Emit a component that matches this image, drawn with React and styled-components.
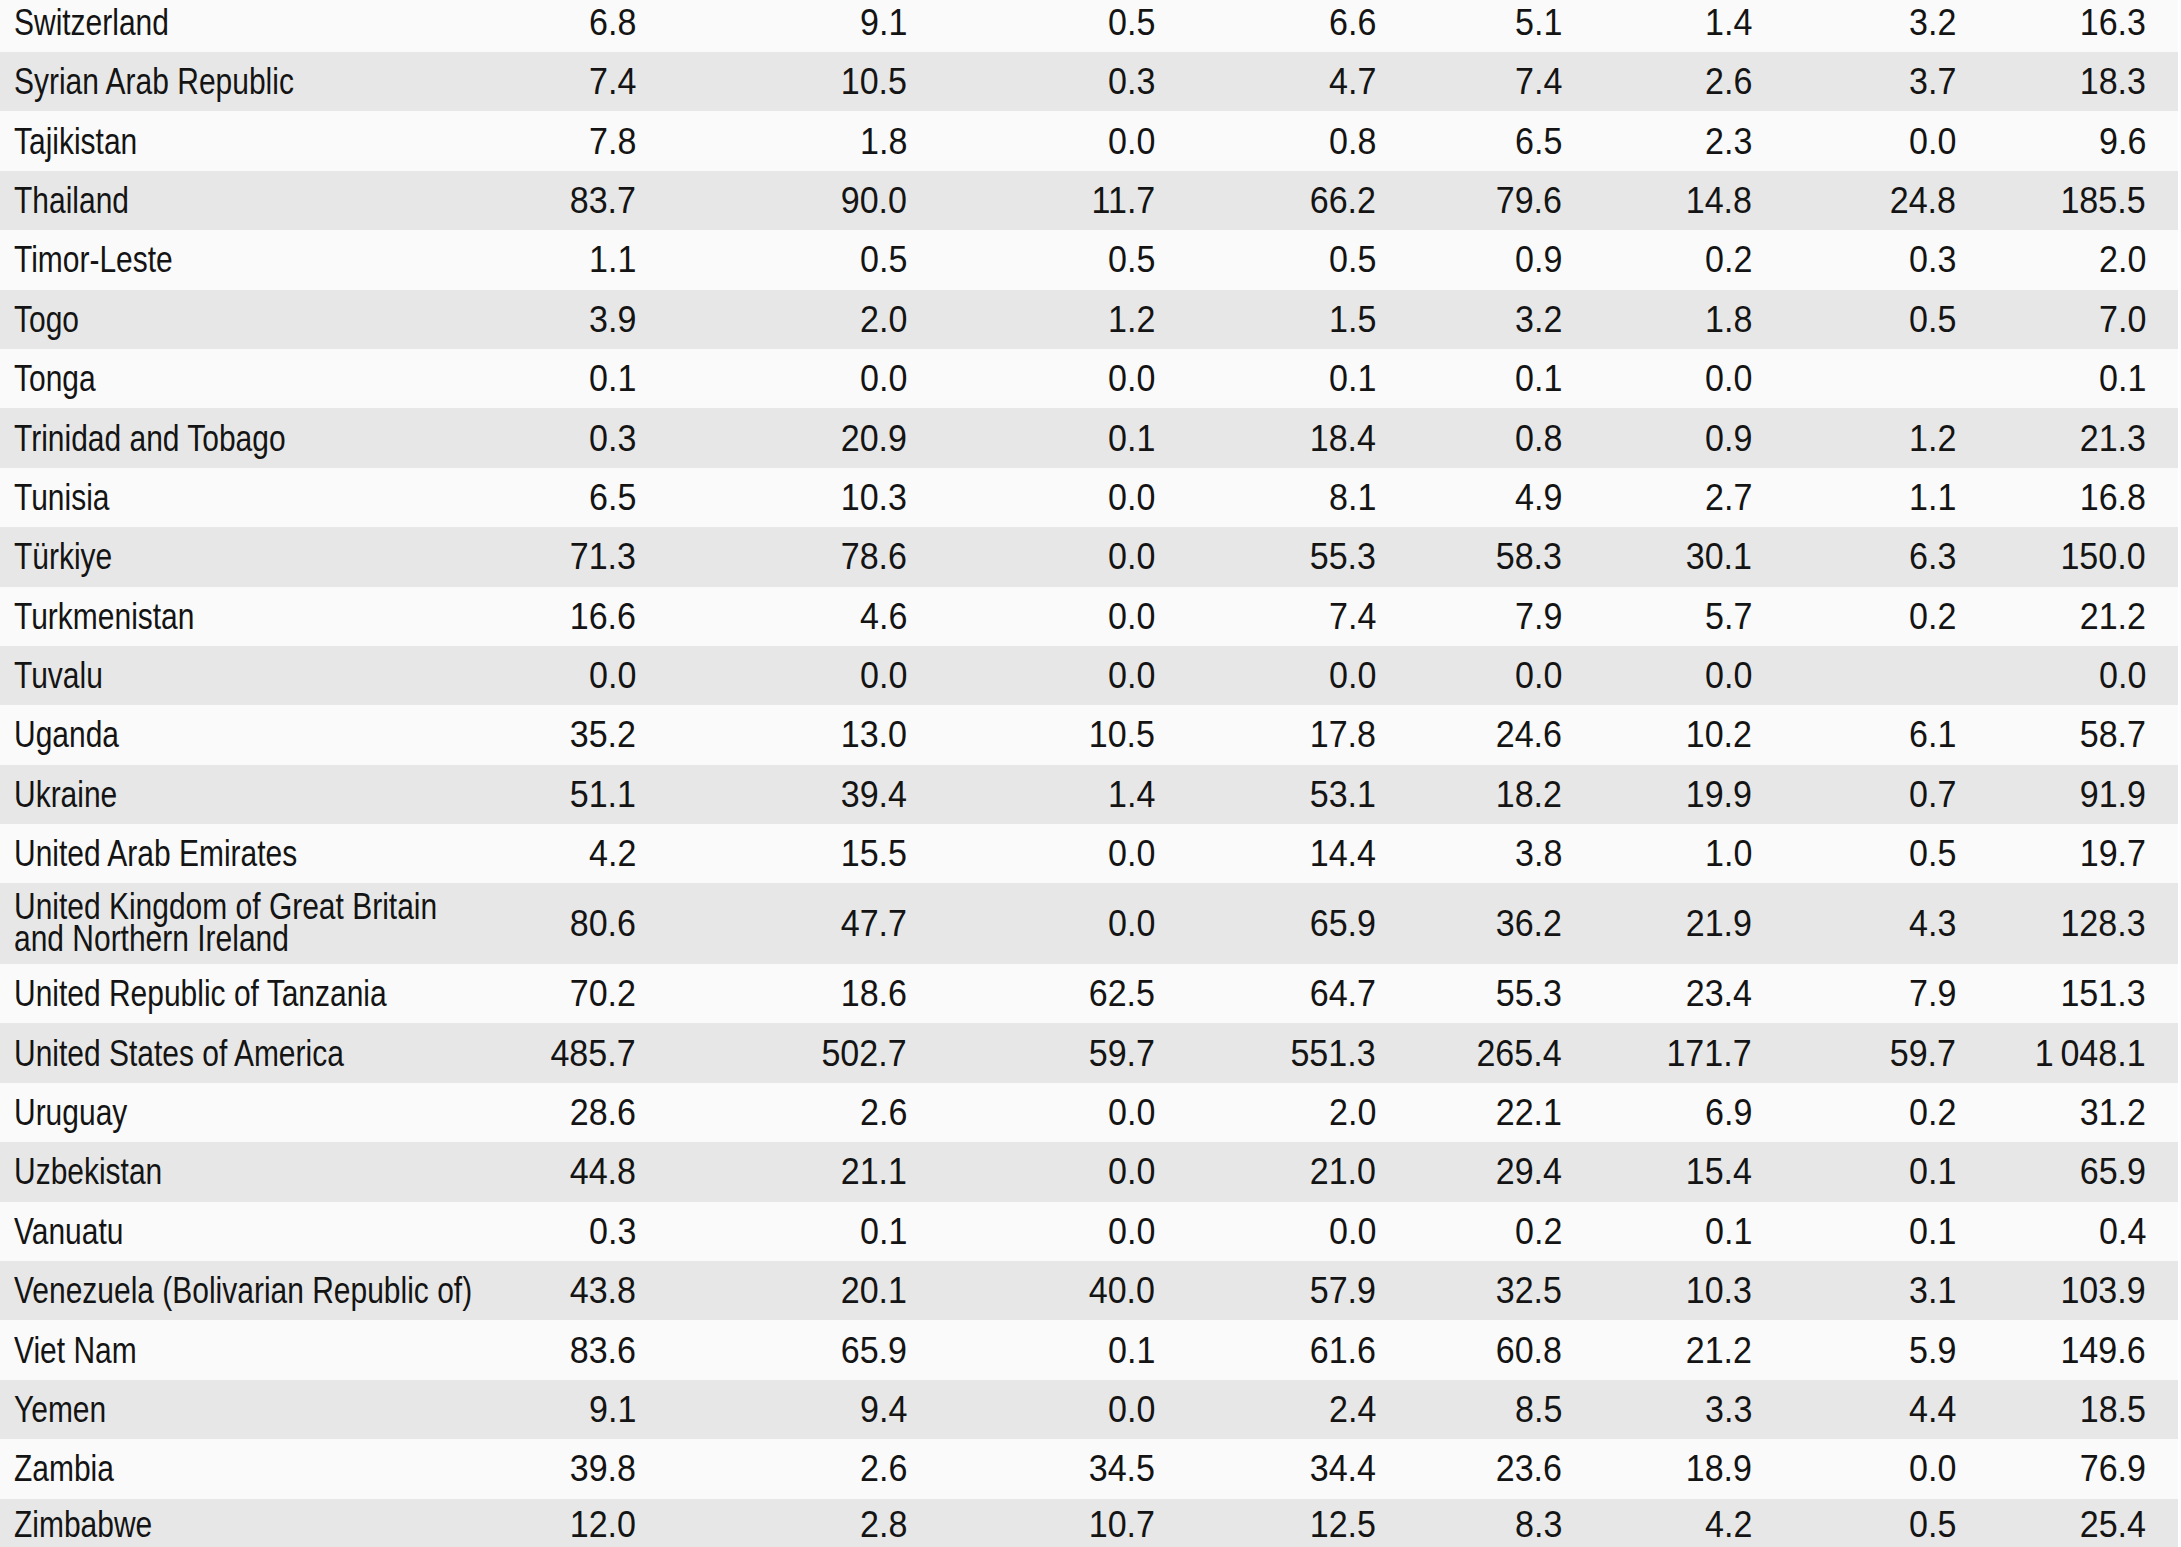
import React from 'react';
import styled, { createGlobalStyle } from 'styled-components';

const GlobalStyle = createGlobalStyle`
  html, body {
    margin: 0;
    padding: 0;
    background: #ffffff;
    overflow: hidden;
  }
  body {
    font-family: "Liberation Sans", Arial, sans-serif;
    color: #141414;
  }
`;

const Table = styled.div`
  width: 2178px;
  margin-top: -7.4px;
  display: flex;
  flex-direction: column;
`;

const rowHeight = p => (p.$tall ? '80.6px' : p.$last ? '52px' : '59.4px');

const Row = styled.div`
  display: grid;
  grid-template-columns: 460px 176px 271px 248px 221px 186px 190px 204px 190px;
  align-items: center;
  height: ${rowHeight};
  padding-right: 32px;
  background: ${p => (p.$alt ? '#e7e7e7' : '#fafafa')};
  font-size: 37px;
  line-height: 37px;
`;

const Name = styled.div`
  padding-left: 14px;
  white-space: nowrap;
`;

// the source face is narrower than Arial, so squeeze the glyphs horizontally
const NameText = styled.span`
  display: inline-block;
  transform: scaleX(0.81);
  transform-origin: left center;
  line-height: ${p => (p.$tall ? '32px' : '37px')};
`;

const Num = styled.div`
  text-align: right;
  white-space: nowrap;
`;

const NumText = styled.span`
  display: inline-block;
  transform: scaleX(0.92);
  transform-origin: right center;
`;

const rows = [
  ['Switzerland', '6.8', '9.1', '0.5', '6.6', '5.1', '1.4', '3.2', '16.3'],
  ['Syrian Arab Republic', '7.4', '10.5', '0.3', '4.7', '7.4', '2.6', '3.7', '18.3'],
  ['Tajikistan', '7.8', '1.8', '0.0', '0.8', '6.5', '2.3', '0.0', '9.6'],
  ['Thailand', '83.7', '90.0', '11.7', '66.2', '79.6', '14.8', '24.8', '185.5'],
  ['Timor-Leste', '1.1', '0.5', '0.5', '0.5', '0.9', '0.2', '0.3', '2.0'],
  ['Togo', '3.9', '2.0', '1.2', '1.5', '3.2', '1.8', '0.5', '7.0'],
  ['Tonga', '0.1', '0.0', '0.0', '0.1', '0.1', '0.0', '', '0.1'],
  ['Trinidad and Tobago', '0.3', '20.9', '0.1', '18.4', '0.8', '0.9', '1.2', '21.3'],
  ['Tunisia', '6.5', '10.3', '0.0', '8.1', '4.9', '2.7', '1.1', '16.8'],
  ['Türkiye', '71.3', '78.6', '0.0', '55.3', '58.3', '30.1', '6.3', '150.0'],
  ['Turkmenistan', '16.6', '4.6', '0.0', '7.4', '7.9', '5.7', '0.2', '21.2'],
  ['Tuvalu', '0.0', '0.0', '0.0', '0.0', '0.0', '0.0', '', '0.0'],
  ['Uganda', '35.2', '13.0', '10.5', '17.8', '24.6', '10.2', '6.1', '58.7'],
  ['Ukraine', '51.1', '39.4', '1.4', '53.1', '18.2', '19.9', '0.7', '91.9'],
  ['United Arab Emirates', '4.2', '15.5', '0.0', '14.4', '3.8', '1.0', '0.5', '19.7'],
  [['United Kingdom of Great Britain', 'and Northern Ireland'], '80.6', '47.7', '0.0', '65.9', '36.2', '21.9', '4.3', '128.3'],
  ['United Republic of Tanzania', '70.2', '18.6', '62.5', '64.7', '55.3', '23.4', '7.9', '151.3'],
  ['United States of America', '485.7', '502.7', '59.7', '551.3', '265.4', '171.7', '59.7', '1\u2009048.1'],
  ['Uruguay', '28.6', '2.6', '0.0', '2.0', '22.1', '6.9', '0.2', '31.2'],
  ['Uzbekistan', '44.8', '21.1', '0.0', '21.0', '29.4', '15.4', '0.1', '65.9'],
  ['Vanuatu', '0.3', '0.1', '0.0', '0.0', '0.2', '0.1', '0.1', '0.4'],
  ['Venezuela (Bolivarian Republic of)', '43.8', '20.1', '40.0', '57.9', '32.5', '10.3', '3.1', '103.9'],
  ['Viet Nam', '83.6', '65.9', '0.1', '61.6', '60.8', '21.2', '5.9', '149.6'],
  ['Yemen', '9.1', '9.4', '0.0', '2.4', '8.5', '3.3', '4.4', '18.5'],
  ['Zambia', '39.8', '2.6', '34.5', '34.4', '23.6', '18.9', '0.0', '76.9'],
  ['Zimbabwe', '12.0', '2.8', '10.7', '12.5', '8.3', '4.2', '0.5', '25.4'],
];

export default function App() {
  return (
    <>
      <GlobalStyle />
      <Table>
        {rows.map(([name, ...values], i) => {
          const tall = Array.isArray(name);
          return (
            <Row key={i} $alt={i % 2 === 1} $tall={tall} $last={i === rows.length - 1}>
              <Name>
                <NameText $tall={tall}>
                  {tall ? (
                    <>
                      {name[0]}
                      <br />
                      {name[1]}
                    </>
                  ) : (
                    name
                  )}
                </NameText>
              </Name>
              {values.map((v, j) => (
                <Num key={j}>{v && <NumText>{v}</NumText>}</Num>
              ))}
            </Row>
          );
        })}
      </Table>
    </>
  );
}
